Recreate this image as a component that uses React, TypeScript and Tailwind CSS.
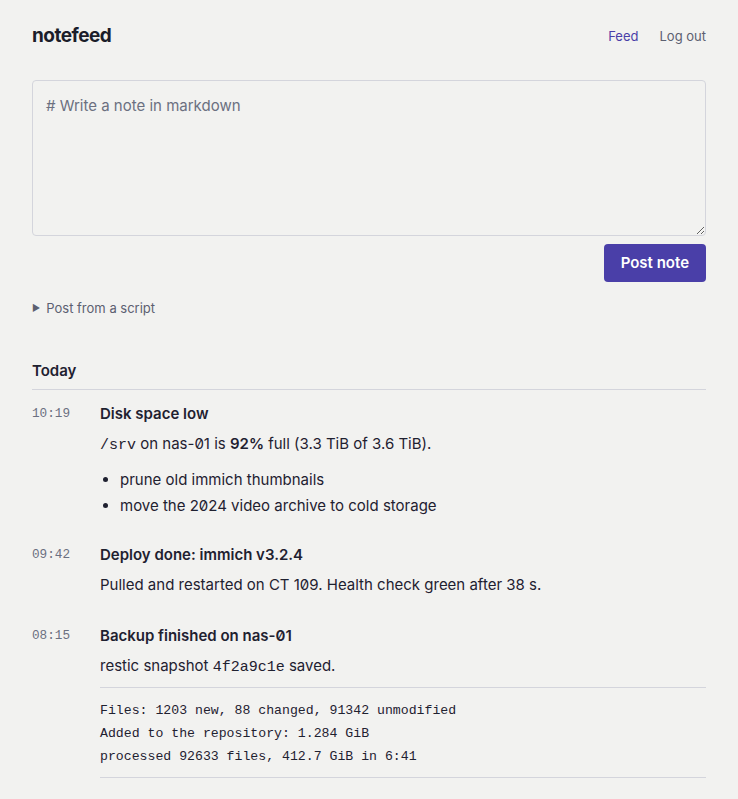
import React from "react";

const mono = "font-['Liberation_Mono','DejaVu_Sans_Mono',monospace]";

function Entry({ time, title, className, children }: { time: string; title: string; className?: string; children: React.ReactNode }) {
  return (
    <div className={`flex ${className ?? ""}`}>
      <div className={`w-[68px] shrink-0 pt-[1px] text-[12.7px] leading-[20px] text-[#6b7080] ${mono} slashed-zero`}>{time}</div>
      <div className="min-w-0 flex-1">
        <h3 className="text-[15px] font-semibold leading-[22px] text-[#1f2130]">{title}</h3>
        {children}
      </div>
    </div>
  );
}

export default function App() {
  return (
    <div className="min-h-[799px] bg-[#f2f2f0] font-['Inter','Noto_Sans',sans-serif] text-[#1f2130] slashed-zero">
      <div className="mx-auto w-[674px] pt-[22px] pb-10">
        <header className="flex items-center justify-between">
          <div className="text-[19px] font-bold leading-[28px] tracking-[-0.5px] text-[#1b1d2a]">notefeed</div>
          <nav className="flex items-center gap-[21px] pt-[2px] text-[13px]">
            <a className="text-[#4a3fa8]">Feed</a>
            <a className="text-[#5c6070]">Log out</a>
          </nav>
        </header>

        <form className="mt-[30px]" onSubmit={(e) => e.preventDefault()}>
          <textarea
            placeholder="# Write a note in markdown"
            className="block h-[156px] w-full rounded-[4px] border border-[#d4d5dc] bg-transparent px-[13px] py-[14px] text-[15px] leading-[22px] text-[#1f2130] placeholder:text-[#6b7080] outline-none"
          />
          <div className="mt-2 flex justify-end">
            <button className="h-[38px] rounded-[4px] bg-[#4a3fa8] px-[17px] text-[15px] font-semibold text-white">Post note</button>
          </div>
        </form>

        <details className="mt-[16px]">
          <summary className="flex cursor-pointer list-none items-center gap-[6px] text-[13px] leading-[20px] text-[#5c6070] [&::-webkit-details-marker]:hidden">
            <span className="text-[9px]">▶</span>
            Post from a script
          </summary>
        </details>

        <section className="mt-[42px]">
          <h2 className="border-b border-[#d4d5dc] pb-[7px] text-[15px] font-semibold leading-[22px]">Today</h2>

          <div className="mt-[13px] flex flex-col">
            <Entry time="10:19" title="Disk space low">
              <p className="mt-2 text-[15px] leading-[22px]">
                <code className={`${mono} text-[15px]`}>/srv</code> on nas-01 is <strong className="font-semibold">92%</strong> full (3.3 TiB of 3.6 TiB).
              </p>
              <ul className="mt-[10px] list-disc pl-5 text-[15px] leading-[26px] marker:text-[#1f2130]">
                <li>prune old immich thumbnails</li>
                <li>move the 2024 video archive to cold storage</li>
              </ul>
            </Entry>

            <Entry time="09:42" title="Deploy done: immich v3.2.4" className="mt-[25px]">
              <p className="mt-2 text-[15px] leading-[22px]">Pulled and restarted on CT 109. Health check green after 38 s.</p>
            </Entry>

            <Entry time="08:15" title="Backup finished on nas-01" className="mt-[29px]">
              <p className="mt-2 text-[15px] leading-[22px]">
                restic snapshot <code className={`${mono} text-[15px]`}>4f2a9c1e</code> saved.
              </p>
              <pre className={`mt-[8px] border-y border-[#d4d5dc] pt-[11px] pb-[9px] text-[13.2px] leading-[23px] text-[#1f2130] ${mono}`}>
{`Files: 1203 new, 88 changed, 91342 unmodified
Added to the repository: 1.284 GiB
processed 92633 files, 412.7 GiB in 6:41`}
              </pre>
            </Entry>
          </div>
        </section>
      </div>
    </div>
  );
}
